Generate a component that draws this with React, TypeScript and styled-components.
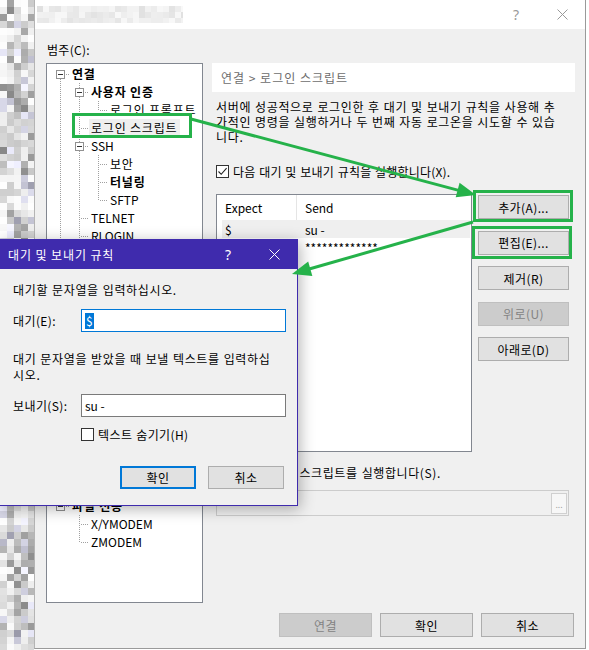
import React from "react";
import styled, { createGlobalStyle, css } from "styled-components";

const GlobalStyle = createGlobalStyle`
	html, body {
		margin: 0;
		padding: 0;
		background: #fff;
	}
	body {
		width: 589px;
		height: 650px;
		overflow: hidden;
		font-family: "Noto Sans CJK KR", sans-serif;
		font-size: 12px;
		color: #000;
	}
`;

const Screen = styled.div`
	position: relative;
	display: flex;
	width: 589px;
	height: 650px;
	overflow: hidden;
	background: #fff;
`;

/* ---------- pixelated backdrop ---------- */

function seeded(seed: number) {
	let s = seed;
	return () => {
		s = (s * 16807) % 2147483647;
		return s / 2147483647;
	};
}

interface MosaicProps {
	width: number;
	height: number;
	cell: number;
	seed: number;
	shade: (r: () => number) => string;
}

function Mosaic({ width, height, cell, seed, shade }: MosaicProps) {
	const r = seeded(seed);
	const cells = [];
	for (let y = 0; y < height; y += cell) {
		for (let x = 0; x < width; x += cell) {
			cells.push(<rect key={`${x}-${y}`} x={x} y={y} width={cell} height={cell} fill={shade(r)} />);
		}
	}
	return (
		<svg width={width} height={height} shapeRendering="crispEdges" style={{ display: "block", flex: "none" }}>
			{cells}
		</svg>
	);
}

const stripShade = (r: () => number) => {
	const t = r();
	let v;
	if (t < 0.35) v = 238 + Math.floor(r() * 17);
	else if (t < 0.7) v = 200 + Math.floor(r() * 32);
	else v = 135 + Math.floor(r() * 60);
	const tint = r() < 0.15 ? 8 : 0;
	return `rgb(${v - tint},${v - tint},${Math.min(255, v + tint)})`;
};

const titleShade = (r: () => number) => {
	const v = 224 + Math.floor(r() * 26);
	return `rgb(${v},${v},${v})`;
};

/* ---------- main window ---------- */

const Window = styled.div`
	width: 552px;
	height: 649px;
	box-sizing: border-box;
	border-left: 1px solid #b4b4b4;
	border-right: 1px solid #9a9a9a;
	border-bottom: 1px solid #9a9a9a;
	background: #f0f0f0;
	display: flex;
	flex-direction: column;
	flex: none;
`;

const TitleBar = styled.div<{ $active?: boolean }>`
	height: ${(p) => (p.$active ? 30 : 29)}px;
	flex: none;
	display: flex;
	align-items: center;
	background: ${(p) => (p.$active ? "#3f2bad" : "#fff")};
	color: ${(p) => (p.$active ? "#fff" : "#999")};
	padding-left: ${(p) => (p.$active ? 8 : 2)}px;
`;

const TitleText = styled.span`
	flex: 1;
	white-space: nowrap;
	letter-spacing: 0.9px;
`;

const TitleButton = styled.div`
	width: 46px;
	height: 100%;
	display: flex;
	align-items: center;
	justify-content: center;
	font-family: "Noto Sans", sans-serif;
	font-size: 14px;
`;

const Body = styled.div`
	display: flex;
	flex-direction: column;
	padding: 13px 11px 0 11px;
`;

const CategoryLabel = styled.div`
	line-height: 15px;
	padding-left: 1px;
	letter-spacing: 0.3px;
`;

const Main = styled.div`
	display: flex;
	gap: 9px;
	margin-top: 6px;
	height: 540px;
`;

/* ---------- category tree ---------- */

const Tree = styled.div`
	width: 157px;
	flex: none;
	box-sizing: border-box;
	border: 1px solid #828790;
	background: #fff;
	padding: 0.5px 0 0 4px;
	overflow: hidden;
`;

const TreeRow = styled.div`
	display: flex;
	align-items: center;
	height: 18px;
	white-space: nowrap;
`;

const TreeLabel = styled.span<{ $bold?: boolean; $selected?: boolean; $hangul?: boolean }>`
	padding: 0 3px 0 2px;
	line-height: 17px;
	letter-spacing: ${(p) => (p.$hangul ? 0.8 : 0)}px;
	font-weight: ${(p) => (p.$bold ? 700 : 400)};
	background: ${(p) => (p.$selected ? "#efefef" : "transparent")};
`;

interface TreeNode {
	label: string;
	depth: number;
	bold?: boolean;
	selected?: boolean;
}

const treeNodes: TreeNode[] = [
	{ label: "연결", depth: 0, bold: true },
	{ label: "사용자 인증", depth: 1, bold: true },
	{ label: "로그인 프롬프트", depth: 2 },
	{ label: "로그인 스크립트", depth: 1, selected: true },
	{ label: "SSH", depth: 1 },
	{ label: "보안", depth: 2 },
	{ label: "터널링", depth: 2, bold: true },
	{ label: "SFTP", depth: 2 },
	{ label: "TELNET", depth: 1 },
	{ label: "RLOGIN", depth: 1 },
	{ label: "시리얼", depth: 1 },
	{ label: "프록시", depth: 1 },
	{ label: "연결 유지", depth: 1 },
	{ label: "터미널", depth: 0 },
	{ label: "키보드", depth: 1 },
	{ label: "VT 모드", depth: 1 },
	{ label: "고급", depth: 1 },
	{ label: "모양", depth: 0 },
	{ label: "여백", depth: 1 },
	{ label: "강조", depth: 1 },
	{ label: "고급", depth: 0 },
	{ label: "추적", depth: 1 },
	{ label: "벨", depth: 1 },
	{ label: "로깅", depth: 1 },
	{ label: "파일 전송", depth: 0, bold: true },
	{ label: "X/YMODEM", depth: 1 },
	{ label: "ZMODEM", depth: 1 },
];

function hasNextSibling(i: number) {
	const d = treeNodes[i].depth;
	for (let j = i + 1; j < treeNodes.length; j++) {
		if (treeNodes[j].depth < d) return false;
		if (treeNodes[j].depth === d) return true;
	}
	return false;
}

function ancestorAt(i: number, depth: number) {
	for (let k = i - 1; k >= 0; k--) if (treeNodes[k].depth === depth) return k;
	return -1;
}

interface ConnectorProps {
	up?: boolean;
	down?: boolean;
	branch?: boolean;
	box?: boolean;
}

const dots = { stroke: "#a0a0a0", strokeWidth: 1, strokeDasharray: "1 1" };

function Connector({ up, down, branch, box }: ConnectorProps) {
	return (
		<svg width={19} height={18} shapeRendering="crispEdges" style={{ flex: "none", display: "block" }}>
			{up && <line x1={9.5} y1={0} x2={9.5} y2={9} {...dots} />}
			{down && <line x1={9.5} y1={10} x2={9.5} y2={18} {...dots} />}
			{branch && <line x1={11} y1={9.5} x2={19} y2={9.5} {...dots} />}
			{box && (
				<>
					<rect x={5.5} y={5.5} width={8} height={8} fill="#fff" stroke="#919191" />
					<line x1={7} y1={9.5} x2={12} y2={9.5} stroke="#333" />
				</>
			)}
		</svg>
	);
}

function CategoryTree() {
	return (
		<Tree>
			{treeNodes.map((n, i) => {
				const cols = [];
				for (let c = 0; c < n.depth; c++) {
					const a = ancestorAt(i, c);
					const on = a >= 0 && hasNextSibling(a);
					cols.push(<Connector key={c} up={on} down={on} />);
				}
				const hasKids = i + 1 < treeNodes.length && treeNodes[i + 1].depth > n.depth;
				cols.push(<Connector key="own" up={i !== 0} down={hasNextSibling(i)} branch box={hasKids} />);
				return (
					<TreeRow key={i}>
						{cols}
						<TreeLabel $bold={n.bold} $selected={n.selected} $hangul={/[가-힣]/.test(n.label)}>
							{n.label}
						</TreeLabel>
					</TreeRow>
				);
			})}
		</Tree>
	);
}

/* ---------- right pane ---------- */

const Pane = styled.div`
	width: 363px;
	flex: none;
	display: flex;
	flex-direction: column;
`;

const PathBox = styled.div`
	height: 29px;
	line-height: 29px;
	background: #fff;
	padding-left: 9px;
	color: #6d6d6d;
	letter-spacing: 1px;
	white-space: nowrap;
`;

const PaneBody = styled.div`
	display: flex;
	flex-direction: column;
	padding: 0 6px 0 4px;
`;

const Paragraph = styled.div<{ $gap: number; $lh?: number }>`
	margin-top: ${(p) => p.$gap}px;
	line-height: ${(p) => p.$lh ?? 15}px;
	letter-spacing: 0.65px;
	word-spacing: 0.6px;
	white-space: nowrap;
`;

const CheckRow = styled.div<{ $gap: number; $indent?: number; $spacing?: number }>`
	display: flex;
	align-items: center;
	gap: 4px;
	height: 15px;
	line-height: 15px;
	margin-top: ${(p) => p.$gap}px;
	padding-left: ${(p) => p.$indent ?? 0}px;
	letter-spacing: ${(p) => p.$spacing ?? 0.2}px;
	word-spacing: 0.8px;
	white-space: nowrap;
`;

const CheckBox = styled.span`
	width: 13px;
	height: 13px;
	flex: none;
	box-sizing: border-box;
	border: 1px solid #333;
	background: #fff;
	display: flex;
	align-items: center;
	justify-content: center;
`;

function Check({ checked }: { checked?: boolean }) {
	return (
		<CheckBox>
			{checked && (
				<svg width={11} height={11} viewBox="0 0 11 11">
					<path d="M1.5 5.5 L4.2 8.3 L9.6 2.2" fill="none" stroke="#222" strokeWidth={1.1} />
				</svg>
			)}
		</CheckBox>
	);
}

const RulesArea = styled.div`
	display: flex;
	gap: 6px;
	margin-top: 15px;
	height: 258px;
`;

const RuleList = styled.div`
	width: 256px;
	flex: none;
	box-sizing: border-box;
	border: 1px solid #828790;
	background: #fff;
`;

const ListHeader = styled.div`
	display: flex;
	height: 25px;
	align-items: stretch;
`;

const HeaderCell = styled.div<{ $width?: number }>`
	width: ${(p) => (p.$width ? `${p.$width}px` : "auto")};
	flex: ${(p) => (p.$width ? "none" : "1")};
	padding-left: 8px;
	display: flex;
	align-items: center;
	box-sizing: border-box;
	border-right: ${(p) => (p.$width ? "1px solid #e5e5e5" : "none")};
`;

const ListRow = styled.div<{ $selected?: boolean }>`
	display: flex;
	height: 18px;
	align-items: center;
	margin: 0 1px 0 5px;
	background: ${(p) => (p.$selected ? "#efefef" : "transparent")};
`;

const Cell = styled.div<{ $width?: number }>`
	width: ${(p) => (p.$width ? `${p.$width}px` : "auto")};
	flex: ${(p) => (p.$width ? "none" : "1")};
	padding-left: ${(p) => (p.$width ? 3 : 8)}px;
	box-sizing: border-box;
	white-space: nowrap;
`;

const ButtonColumn = styled.div`
	display: flex;
	flex-direction: column;
	gap: 11.5px;
	padding-top: 1px;
`;

const Button = styled.button<{ $width: number; $height?: number; $default?: boolean }>`
	width: ${(p) => p.$width}px;
	height: ${(p) => p.$height ?? 24}px;
	padding: 0;
	box-sizing: border-box;
	font-family: "Noto Sans CJK KR", sans-serif;
	font-size: 12px;
	letter-spacing: 0.4px;
	color: #000;
	background: #e1e1e1;
	border: 1px solid #adadad;
	border-radius: 0;
	${(p) =>
		p.$default &&
		css`
			border: 2px solid #0078d7;
		`}
	&:disabled {
		background: #cccccc;
		border-color: #bfbfbf;
		color: #838383;
	}
`;

const ScriptField = styled.div`
	margin-top: 10.5px;
	width: 353px;
	height: 26px;
	box-sizing: border-box;
	border: 1px solid #cccccc;
	background: #f0f0f0;
	display: flex;
	justify-content: flex-end;
	align-items: center;
	padding-right: 1px;
`;

const BrowseButton = styled.div`
	width: 16px;
	height: 21px;
	box-sizing: border-box;
	border: 1px solid #d0d0d0;
	background: #f7f7f7;
	color: #9a9a9a;
	font-family: "Noto Sans", sans-serif;
	font-size: 9px;
	display: flex;
	align-items: flex-end;
	justify-content: center;
	padding-bottom: 4px;
	line-height: 8px;
`;

const Footer = styled.div`
	display: flex;
	justify-content: flex-end;
	gap: 8px;
	margin-top: 10px;
`;

/* ---------- rule dialog ---------- */

const RuleDialog = styled.div`
	position: absolute;
	left: 0;
	top: 239px;
	width: 298px;
	height: 267px;
	box-sizing: border-box;
	border: 1px solid #3f2bad;
	border-left: none;
	border-top: none;
	background: #f0f0f0;
	box-shadow: 2px 3px 14px rgba(0, 0, 0, 0.3);
	display: flex;
	flex-direction: column;
	z-index: 2;
`;

const DialogBody = styled.div`
	display: flex;
	flex-direction: column;
	padding: 13px 11px 0 13px;
`;

const FieldRow = styled.div<{ $gap: number }>`
	display: flex;
	align-items: center;
	margin-top: ${(p) => p.$gap}px;
`;

const FieldLabel = styled.span`
	width: 68px;
	flex: none;
	letter-spacing: 0.4px;
	white-space: nowrap;
`;

const TextField = styled.div<{ $focused?: boolean }>`
	width: 205px;
	height: 23px;
	box-sizing: border-box;
	border: 1px solid ${(p) => (p.$focused ? "#0078d7" : "#7a7a7a")};
	background: #fff;
	display: flex;
	align-items: center;
	padding-left: 3px;
	white-space: nowrap;
`;

const Selection = styled.span`
	background: #0078d7;
	color: #fff;
	padding: 0 1px;
	line-height: 16px;
`;

const DialogButtons = styled.div`
	display: flex;
	justify-content: flex-end;
	gap: 12px;
	margin-top: 24px;
	padding-right: 2px;
`;

/* ---------- annotation marks ---------- */

const Marks = styled.svg`
	position: absolute;
	left: 0;
	top: 0;
	z-index: 3;
	pointer-events: none;
`;

const GREEN = "#25b24a";

function Arrow({ from, to }: { from: [number, number]; to: [number, number] }) {
	const dx = to[0] - from[0];
	const dy = to[1] - from[1];
	const len = Math.hypot(dx, dy);
	const ux = dx / len;
	const uy = dy / len;
	const head = 19;
	const half = 7.5;
	const bx = to[0] - ux * head;
	const by = to[1] - uy * head;
	const p1 = `${bx - uy * half},${by + ux * half}`;
	const p2 = `${bx + uy * half},${by - ux * half}`;
	return (
		<>
			<line x1={from[0]} y1={from[1]} x2={bx + ux * 2} y2={by + uy * 2} stroke={GREEN} strokeWidth={3} />
			<polygon points={`${to[0]},${to[1]} ${p1} ${p2}`} fill={GREEN} />
		</>
	);
}

function CloseGlyph({ color }: { color: string }) {
	return (
		<svg width={11} height={11} viewBox="0 0 11 11">
			<path d="M0.5 0.5 L10.5 10.5 M10.5 0.5 L0.5 10.5" stroke={color} strokeWidth={1} fill="none" />
		</svg>
	);
}

export default function App() {
	return (
		<>
			<GlobalStyle />
			<Screen>
				<Mosaic width={34} height={650} cell={7} seed={91} shade={stripShade} />
				<Window>
					<TitleBar>
						<TitleText>
							<Mosaic width={146} height={17} cell={6} seed={7} shade={titleShade} />
						</TitleText>
						<TitleButton>?</TitleButton>
						<TitleButton>
							<CloseGlyph color="#999" />
						</TitleButton>
					</TitleBar>
					<Body>
						<CategoryLabel>범주(C):</CategoryLabel>
						<Main>
							<CategoryTree />
							<Pane>
								<PathBox>연결 &gt; 로그인 스크립트</PathBox>
								<PaneBody>
									<Paragraph $gap={7}>
										서버에 성공적으로 로그인한 후 대기 및 보내기 규칙을 사용해 추
										<br />
										가적인 명령을 실행하거나 두 번째 자동 로그온을 시도할 수 있습
										<br />
										니다.
									</Paragraph>
									<CheckRow $gap={20}>
										<Check checked />
										다음 대기 및 보내기 규칙을 실행합니다(X).
									</CheckRow>
									<RulesArea>
										<RuleList>
											<ListHeader>
												<HeaderCell $width={80}>Expect</HeaderCell>
												<HeaderCell>Send</HeaderCell>
											</ListHeader>
											<ListRow $selected>
												<Cell $width={75}>$</Cell>
												<Cell>su -</Cell>
											</ListRow>
											<ListRow>
												<Cell $width={75}></Cell>
												<Cell>*************</Cell>
											</ListRow>
										</RuleList>
										<ButtonColumn>
											<Button $width={91}>추가(A)...</Button>
											<Button $width={91}>편집(E)...</Button>
											<Button $width={91}>제거(R)</Button>
											<Button $width={91} disabled>
												위로(U)
											</Button>
											<Button $width={91}>아래로(D)</Button>
										</ButtonColumn>
									</RulesArea>
									<CheckRow $gap={12.5} $spacing={0.6}>
										<Check />
										다음 로그인 스크립트를 실행합니다(S).
									</CheckRow>
									<ScriptField>
										<BrowseButton>...</BrowseButton>
									</ScriptField>
								</PaneBody>
							</Pane>
						</Main>
						<Footer>
							<Button $width={93} disabled>
								연결
							</Button>
							<Button $width={93}>확인</Button>
							<Button $width={93}>취소</Button>
						</Footer>
					</Body>
				</Window>

				<RuleDialog>
					<TitleBar $active>
						<TitleText>대기 및 보내기 규칙</TitleText>
						<TitleButton>?</TitleButton>
						<TitleButton>
							<CloseGlyph color="#fff" />
						</TitleButton>
					</TitleBar>
					<DialogBody>
						<Paragraph $gap={0}>대기할 문자열을 입력하십시오.</Paragraph>
						<FieldRow $gap={12}>
							<FieldLabel>대기(E):</FieldLabel>
							<TextField $focused>
								<Selection>$</Selection>
							</TextField>
						</FieldRow>
						<Paragraph $gap={19} $lh={16}>
							대기 문자열을 받았을 때 보낼 텍스트를 입력하십
							<br />
							시오.
						</Paragraph>
						<FieldRow $gap={11}>
							<FieldLabel>보내기(S):</FieldLabel>
							<TextField>su -</TextField>
						</FieldRow>
						<CheckRow $gap={10} $indent={68} $spacing={0.4}>
							<Check />
							텍스트 숨기기(H)
						</CheckRow>
						<DialogButtons>
							<Button $width={76} $height={23} $default>
								확인
							</Button>
							<Button $width={76} $height={23}>
								취소
							</Button>
						</DialogButtons>
					</DialogBody>
				</RuleDialog>

				<Marks width={589} height={650} viewBox="0 0 589 650">
					<rect x={73.5} y={114.5} width={117} height={22} fill="none" stroke={GREEN} strokeWidth={3} />
					<rect x={474.5} y={191.5} width={97} height={29} fill="none" stroke={GREEN} strokeWidth={3} />
					<rect x={473.5} y={227.5} width={97} height={30} fill="none" stroke={GREEN} strokeWidth={3} />
					<Arrow from={[191, 119]} to={[476, 195]} />
					<Arrow from={[473, 222]} to={[292, 274]} />
				</Marks>
			</Screen>
		</>
	);
}
